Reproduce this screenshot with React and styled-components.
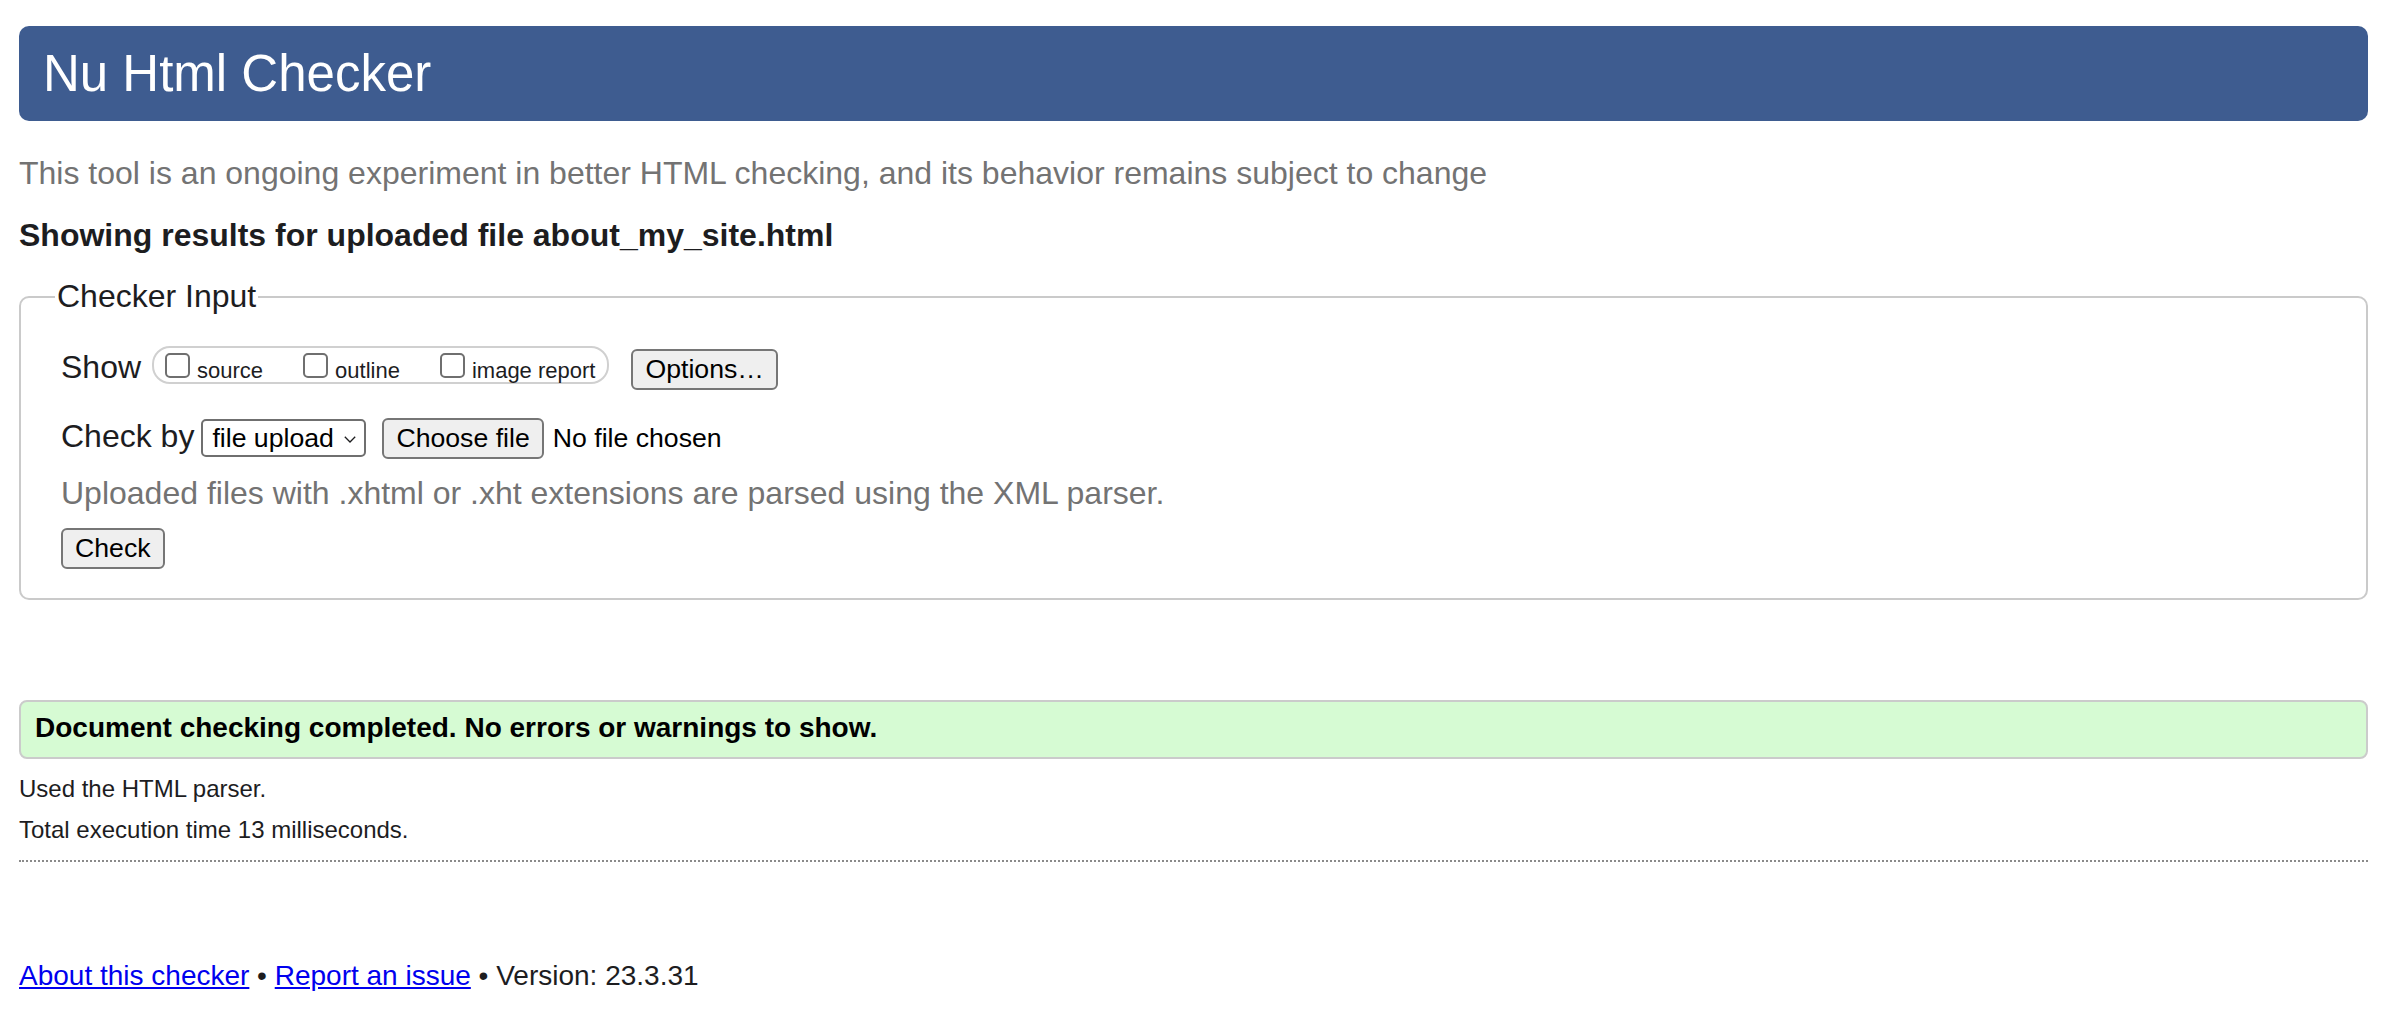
import React from "react";
import styled, { createGlobalStyle } from "styled-components";

const GlobalStyle = createGlobalStyle`
  html, body {
    margin: 0;
    padding: 0;
    background: #fff;
  }
  body {
    font-family: "Liberation Sans", Arial, Helvetica, sans-serif;
    color: #1d1d1f;
  }
`;

const App = () => {
  return (
    <Page>
      <GlobalStyle />
      <Banner>Nu Html Checker</Banner>
      <Intro>
        This tool is an ongoing experiment in better HTML checking, and its
        behavior remains subject to change
      </Intro>
      <ResultsFor>Showing results for uploaded file about_my_site.html</ResultsFor>

      <Fieldset>
        <Legend>Checker Input</Legend>

        <Row>
          <Label $space={11}>Show</Label>
          <CheckGroup>
            <Option>
              <Checkbox type="checkbox" />
              source
            </Option>
            <Option>
              <Checkbox type="checkbox" />
              outline
            </Option>
            <Option>
              <Checkbox type="checkbox" />
              image report
            </Option>
          </CheckGroup>
          <Button type="button" $ml={22}>
            Options…
          </Button>
        </Row>

        <Row $mt={28}>
          <Label $space={7}>Check by</Label>
          <SelectBox>
            <Select defaultValue="file">
              <option value="file">file upload</option>
            </Select>
            <Chevron viewBox="0 0 12 7" width="12" height="7">
              <path d="M0.8 0.8 L6 6 L11.2 0.8" fill="none" stroke="#1d1d1f" strokeWidth="1.3" />
            </Chevron>
          </SelectBox>
          <Button type="button" $ml={16}>
            Choose file
          </Button>
          <FileName>No file chosen</FileName>
        </Row>

        <Hint>Uploaded files with .xhtml or .xht extensions are parsed using the XML parser.</Hint>

        <Row $mt={16}>
          <Button type="button">Check</Button>
        </Row>
      </Fieldset>

      <Success>Document checking completed. No errors or warnings to show.</Success>
      <Note $mt={16}>Used the HTML parser.</Note>
      <Note $mt={13}>Total execution time 13 milliseconds.</Note>
      <Rule />

      <Footer>
        <Link href="#about">About this checker</Link> •{" "}
        <Link href="#issue">Report an issue</Link> • Version: 23.3.31
      </Footer>
    </Page>
  );
};

// Styled components
const Page = styled.div`
  padding: 26px 34px 30px 19px;
`;

const Banner = styled.h1`
  margin: 0;
  padding: 18px 24px;
  background: #3e5c90;
  color: #fff;
  font-size: 51px;
  font-weight: 400;
  line-height: 59px;
  border-radius: 10px;
`;

const Intro = styled.p`
  margin: 34px 0 0;
  font-size: 32px;
  line-height: 37px;
  color: #737373;
`;

const ResultsFor = styled.h2`
  margin: 25px 0 0;
  font-size: 32px;
  line-height: 37px;
  font-weight: 700;
  color: #1d1d1f;
`;

const Fieldset = styled.fieldset`
  margin: 24px 0 0;
  padding: 31px 24px 29px 40px;
  border: 2px solid #cacaca;
  border-radius: 10px;
  min-width: 0;
`;

const Legend = styled.legend`
  margin-left: -6px;
  padding: 0 2px;
  font-size: 32px;
  line-height: 37px;
`;

const Row = styled.div`
  display: flex;
  align-items: baseline;
  margin-top: ${(p) => p.$mt || 0}px;
`;

const Label = styled.span`
  font-size: 32px;
  line-height: 37px;
  margin-right: ${(p) => p.$space || 0}px;
`;

const CheckGroup = styled.div`
  display: inline-flex;
  align-items: baseline;
  gap: 40px;
  box-sizing: border-box;
  height: 38px;
  padding: 5px 12px 2px 11px;
  border: 2px solid #d0d0d0;
  border-radius: 18px;
`;

const Option = styled.label`
  display: inline-flex;
  align-items: baseline;
  font-size: 22px;
  line-height: 27px;
`;

const Checkbox = styled.input`
  appearance: none;
  -webkit-appearance: none;
  box-sizing: border-box;
  width: 25px;
  height: 25px;
  margin: 0 7px 0 0;
  border: 2px solid #6f6f6f;
  border-radius: 5px;
  background: #fff;
`;

const Button = styled.button`
  box-sizing: border-box;
  height: 41px;
  margin-left: ${(p) => p.$ml || 0}px;
  padding: 0 12px;
  border: 2px solid #767676;
  border-radius: 6px;
  background: #efefef;
  color: #000;
  font-family: "Liberation Sans", Arial, sans-serif;
  font-size: 26.67px;
  line-height: 37px;
`;

const SelectBox = styled.div`
  display: inline-flex;
  align-items: center;
  box-sizing: border-box;
  width: 165px;
  height: 38px;
  padding: 0 8px 0 9px;
  border: 2px solid #6f6f6f;
  border-radius: 5px;
  background: #fff;
`;

const Select = styled.select`
  appearance: none;
  -webkit-appearance: none;
  flex: 1;
  min-width: 0;
  padding: 0;
  border: none;
  outline: none;
  background: transparent;
  color: #000;
  font-family: "Liberation Sans", Arial, sans-serif;
  font-size: 26.67px;
  line-height: 34px;
`;

const Chevron = styled.svg`
  flex: none;
  margin-top: 2px;
`;

const FileName = styled.span`
  margin-left: 9px;
  font-size: 26.67px;
  line-height: 37px;
  color: #000;
`;

const Hint = styled.p`
  margin: 16px 0 0;
  font-size: 32px;
  line-height: 37px;
  color: #737373;
`;

const Success = styled.div`
  margin-top: 100px;
  padding: 10px 14px 13px;
  border: 2px solid #cbcbcb;
  border-radius: 8px;
  background: #d6fbd3;
  color: #000;
  font-size: 28px;
  font-weight: 700;
  line-height: 32px;
`;

const Note = styled.p`
  margin: ${(p) => p.$mt || 0}px 0 0;
  font-size: 24px;
  line-height: 28px;
  color: #1d1d1f;
`;

const Rule = styled.div`
  margin-top: 16px;
  border-top: 2px dotted #8a8a8a;
`;

const Footer = styled.p`
  margin: 98px 0 0;
  font-size: 28px;
  line-height: 32px;
  color: #1d1d1f;
`;

const Link = styled.a`
  color: #0000ee;
  text-decoration: underline;
`;

export default App;
